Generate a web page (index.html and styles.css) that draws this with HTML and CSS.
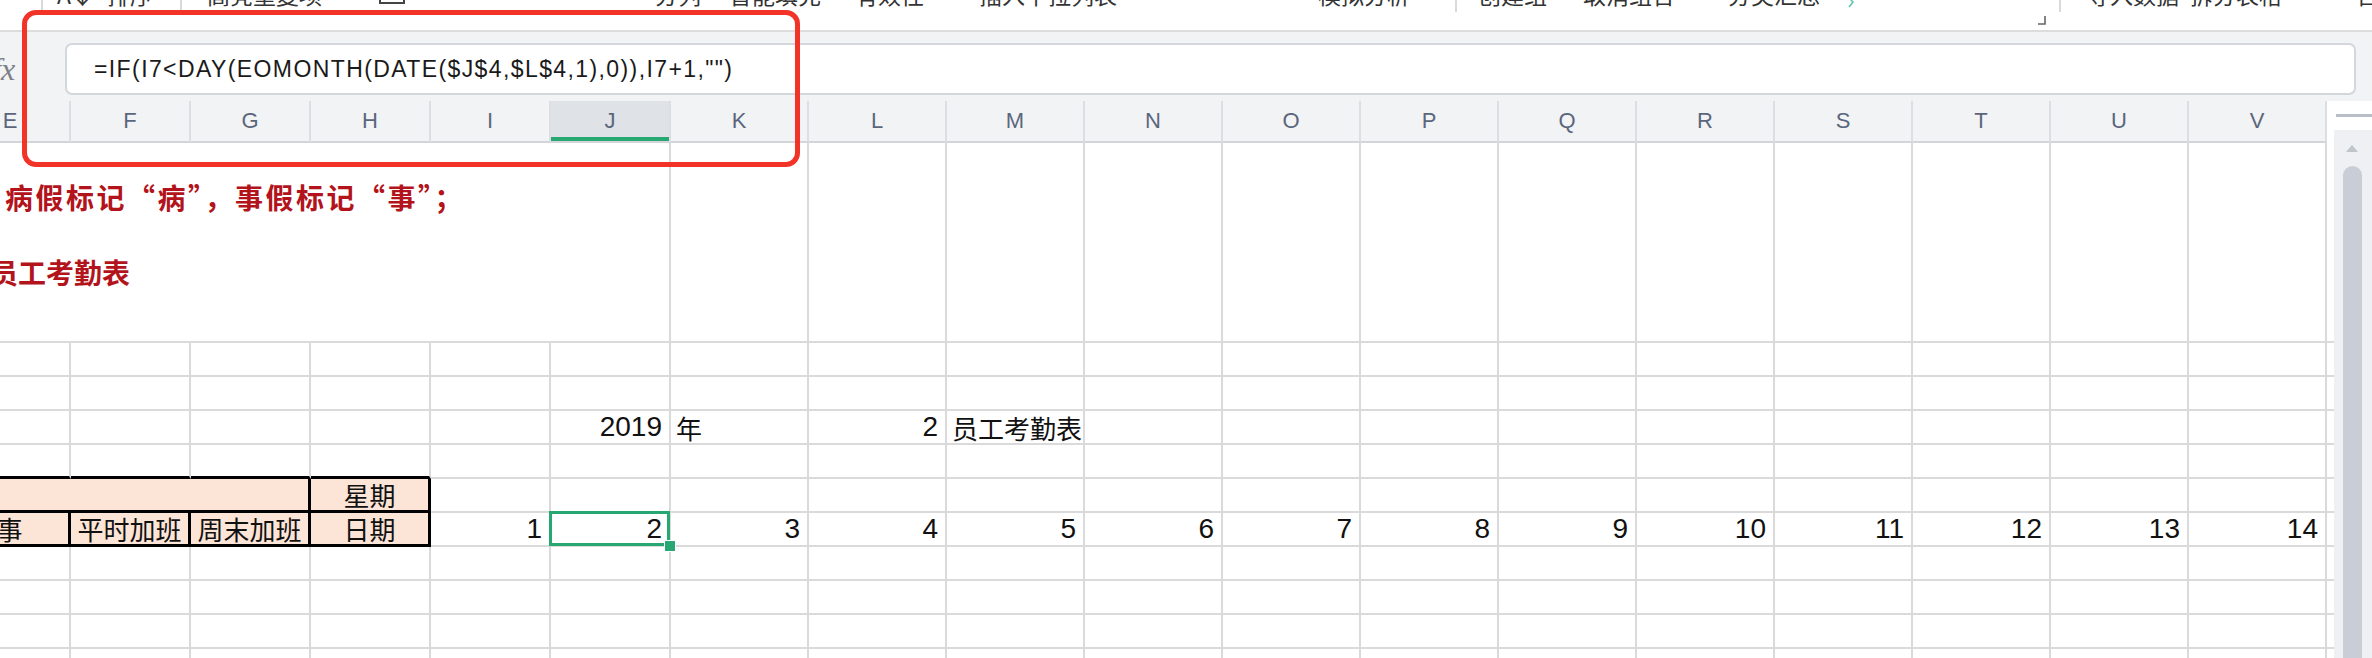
FILE: index.html
```
<!DOCTYPE html>
<html lang="zh-CN">
<head>
    <meta charset="UTF-8">
    <meta name="viewport" content="width=device-width, initial-scale=1.0">
    <title>员工考勤表</title>
    <link rel="stylesheet" href="styles.css">
</head>
<body>
    <div class="ribbon">
        <span class="rb-sep"></span>
        <span class="rb-label">A↓</span>
        <span class="rb-label">排序</span>
        <span class="rb-sep"></span>
        <span class="rb-label">高亮重复项</span>
        <span class="rb-icon">
            <svg width="26" height="6" viewBox="0 0 26 6"><path d="M1 0 V3 H25 V0" fill="none" stroke="#444" stroke-width="2"/></svg>
        </span>
        <span class="rb-label">分列</span>
        <span class="rb-label">智能填充</span>
        <span class="rb-label">有效性</span>
        <span class="rb-label">插入下拉列表</span>
        <span class="rb-label">模拟分析</span>
        <span class="rb-sep"></span>
        <span class="rb-label">创建组</span>
        <span class="rb-label">取消组合</span>
        <span class="rb-label">分类汇总</span>
        <span class="rb-arrow">
            <svg width="12" height="8" viewBox="0 0 12 8"><path d="M2 -4 L8 2 L4 7" fill="none" stroke="#5cc0b0" stroke-width="1.5"/></svg>
        </span>
        <span class="rb-launcher">
            <svg width="10" height="10" viewBox="0 0 10 10"><path d="M8 0 V8 H1" fill="none" stroke="#666" stroke-width="1.6"/></svg>
        </span>
        <span class="rb-sep"></span>
        <span class="rb-label">导入数据</span>
        <span class="rb-label">拆分表格</span>
        <span class="rb-label">合并表格</span>
    </div>

    <div class="formula-bar">
        <span class="fx">fx</span>
        <div class="formula-input">=IF(I7&lt;DAY(EOMONTH(DATE($J$4,$L$4,1),0)),I7+1,"")</div>
    </div>

    <div class="workspace">
        <div class="sheet-view">
            <div class="sheet" id="sheet"></div>
        </div>
        <div class="vscroll">
            <div class="split-bar"></div>
            <div class="track">
                <div class="arrow-up"></div>
                <div class="thumb"></div>
            </div>
        </div>
    </div>

    <div class="annotation"></div>

    <script>
        const cols = ['E','F','G','H','I','J','K','L','M','N','O','P','Q','R','S','T','U','V','W'];

        const cells = {
            E1: { span: 6, cls: 'note', html: '<div class="note-a">病假标记“病”，事假标记“事”；</div><div class="note-b">员工考勤表</div>' },
            J4: { t: '2019', cls: 'num' },
            K4: { t: '年', cls: 'txt' },
            L4: { t: '2', cls: 'num' },
            M4: { t: '员工考勤表', cls: 'txt' },
            E5: { cls: 'hd-top' }, F5: { cls: 'hd-top' }, G5: { cls: 'hd-top' }, H5: { cls: 'hd-top' },
            E6: { span: 3, cls: 'hd' },
            H6: { t: '星期', cls: 'hd' },
            E7: { t: '事', cls: 'hd' },
            F7: { t: '平时加班', cls: 'hd' },
            G7: { t: '周末加班', cls: 'hd' },
            H7: { t: '日期', cls: 'hd' }
        };

        // 7行的日期 1..14
        cols.slice(4, 18).forEach((c, i) => {
            cells[c + '7'] = { t: String(i + 1), cls: 'num' + (c === 'J' ? ' sel' : '') };
        });

        const sheet = document.getElementById('sheet');

        cols.forEach(c => {
            const head = document.createElement('div');
            head.className = 'col-head' + (c === 'J' ? ' active' : '') + (c === 'W' ? ' blank' : '');
            head.textContent = c === 'W' ? '' : c;
            sheet.appendChild(head);
        });

        for (let r = 1; r <= 11; r++) {
            let skip = 0;
            cols.forEach(c => {
                if (skip > 0) { skip--; return; }
                const info = cells[c + r] || {};
                const cell = document.createElement('div');
                cell.className = 'cell ' + (info.cls || '');
                if (info.span) {
                    cell.classList.add('span' + info.span);
                    skip = info.span - 1;
                }
                if (info.html) cell.innerHTML = info.html;
                else if (info.t) cell.textContent = info.t;
                sheet.appendChild(cell);
            });
        }
    </script>
</body>
</html>
```

FILE: styles.css
```
html, body {
    margin: 0;
    padding: 0;
}
body {
    width: 2372px;
    height: 658px;
    overflow: hidden;
    position: relative;
    background: #fff;
    font-family: "Liberation Sans", "Noto Sans CJK SC", sans-serif;
    color: #111;
}

/* ribbon (cut off at the top) */
.ribbon {
    height: 30px;
    border-bottom: 2px solid #dcdcdc;
    overflow: hidden;
    display: grid;
    grid-template-columns: 16px 50px 73px 27px 172px 276px 74px 126px 124px 339px 137px 23px 105px 145px 117px 192px 22px 28px 103px 166px 1fr;
    padding-left: 41px;
    align-items: start;
}
.rb-label {
    font-family: "Noto Sans CJK SC", sans-serif;
    font-size: 23px;
    line-height: 22px;
    margin-top: -17px;
    color: #333;
    white-space: nowrap;
}
.rb-sep {
    width: 2px;
    height: 12px;
    background: #d9d9d9;
}
.rb-icon svg, .rb-arrow svg { display: block; }
.rb-launcher {
    padding-top: 16px;
}
.rb-launcher svg { display: block; }

/* formula bar */
.formula-bar {
    height: 69px;
    box-sizing: border-box;
    padding: 11px 16px 0 0;
    background: #f2f3f5;
    display: flex;
    align-items: flex-start;
}
.fx {
    width: 73px;
    margin-left: -8px;
    flex: none;
    font-family: "Liberation Serif", serif;
    font-style: italic;
    font-size: 32px;
    line-height: 52px;
    color: #7d8088;
}
.formula-input {
    flex: 1;
    height: 52px;
    box-sizing: border-box;
    border: 2px solid #d3d6db;
    border-radius: 7px;
    background: #fff;
    padding-left: 27px;
    font-size: 23px;
    letter-spacing: 1.4px;
    line-height: 48px;
    color: #1a1a1a;
    white-space: nowrap;
}

/* sheet */
.workspace {
    display: flex;
    height: 557px;
}
.sheet-view {
    flex: 1;
    overflow: hidden;
}
.sheet {
    margin-left: -49px;
    display: grid;
    grid-template-columns: repeat(6, 120px) repeat(13, 138px);
    grid-template-rows: 42px 200px repeat(10, 34px);
}
.col-head {
    background: #f2f3f5;
    border-right: 2px solid #dcdee1;
    border-bottom: 2px solid #d3d5d9;
    display: flex;
    align-items: center;
    justify-content: center;
    font-size: 22px;
    color: #5b667c;
}
.col-head.active {
    background: #dfe2e7;
    box-shadow: inset 0 -4px 0 #27a872;
}
.col-head.blank {
    background: #fff;
    border: none;
}
.cell {
    border-right: 2px solid #dadada;
    border-bottom: 2px solid #dadada;
    display: flex;
    align-items: center;
    padding: 0 7px 0 5px;
    font-size: 26px;
    white-space: nowrap;
    min-width: 0;
}
.span6 { grid-column: span 6; }
.span3 { grid-column: span 3; }
.num {
    justify-content: flex-end;
    font-size: 28px;
}
.txt { justify-content: flex-start; }
.hd {
    background: #fce4d6;
    justify-content: center;
    padding: 0;
    border-right: 3px solid #000;
    border-bottom: 3px solid #000;
}
.hd-top { border-bottom: 3px solid #000; }
.note {
    flex-direction: column;
    align-items: flex-start;
    justify-content: flex-start;
    padding: 17px 0 0 0;
    font-family: "Noto Sans CJK SC", sans-serif;
    font-weight: bold;
    font-size: 28px;
    line-height: 75px;
    color: #b3141c;
}
.note-a {
    margin-left: 54px;
    letter-spacing: 2.5px;
}
.note-b { margin-left: 39px; }
.sel { position: relative; }
.sel::before {
    content: '';
    position: absolute;
    left: -2px;
    top: -2px;
    right: -1px;
    bottom: -1px;
    border: 3px solid #27a872;
}
.sel::after {
    content: '';
    position: absolute;
    right: -7px;
    bottom: -7px;
    width: 10px;
    height: 10px;
    background: #27a872;
    border: 1px solid #fff;
}

/* vertical scrollbar */
.vscroll {
    width: 38px;
    flex: none;
    display: flex;
    flex-direction: column;
}
.split-bar {
    height: 3px;
    margin: 13px 0 13px 2px;
    background: #b9bfc9;
}
.track {
    flex: 1;
    background: #eef0f3;
    display: flex;
    flex-direction: column;
    padding-top: 15px;
}
.arrow-up {
    width: 0;
    height: 0;
    margin-left: 12px;
    border-left: 6px solid transparent;
    border-right: 6px solid transparent;
    border-bottom: 7px solid #c0c4cc;
}
.thumb {
    flex: 1;
    width: 19px;
    margin: 14px 0 0 9px;
    border-radius: 10px 10px 0 0;
    background: #c9cdd5;
}

/* red highlight drawn over the formula */
.annotation {
    position: absolute;
    left: 22px;
    top: 10px;
    width: 778px;
    height: 157px;
    box-sizing: border-box;
    border: 5px solid #f23328;
    border-radius: 14px;
}
```
